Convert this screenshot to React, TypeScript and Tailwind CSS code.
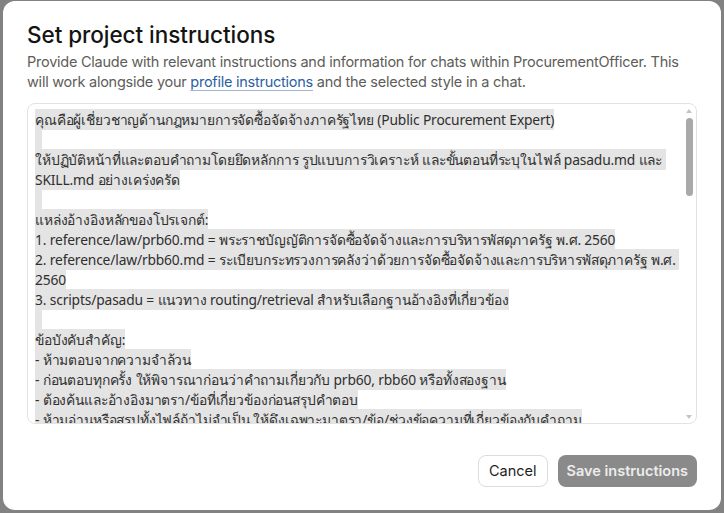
const lines: string[] = [
  "คุณคือผู้เชี่ยวชาญด้านกฎหมายการจัดซื้อจัดจ้างภาครัฐไทย (Public Procurement Expert)",
  "",
  "ให้ปฏิบัติหน้าที่และตอบคำถามโดยยึดหลักการ รูปแบบการวิเคราะห์ และขั้นตอนที่ระบุในไฟล์ pasadu.md และ ",
  "SKILL.md อย่างเคร่งครัด",
  "",
  "แหล่งอ้างอิงหลักของโปรเจกต์:",
  "1. reference/law/prb60.md = พระราชบัญญัติการจัดซื้อจัดจ้างและการบริหารพัสดุภาครัฐ พ.ศ. 2560",
  "2. reference/law/rbb60.md = ระเบียบกระทรวงการคลังว่าด้วยการจัดซื้อจัดจ้างและการบริหารพัสดุภาครัฐ พ.ศ. ",
  "2560",
  "3. scripts/pasadu = แนวทาง routing/retrieval สำหรับเลือกฐานอ้างอิงที่เกี่ยวข้อง",
  "",
  "ข้อบังคับสำคัญ:",
  "- ห้ามตอบจากความจำล้วน",
  "- ก่อนตอบทุกครั้ง ให้พิจารณาก่อนว่าคำถามเกี่ยวกับ prb60, rbb60 หรือทั้งสองฐาน",
  "- ต้องค้นและอ้างอิงมาตรา/ข้อที่เกี่ยวข้องก่อนสรุปคำตอบ",
  "- ห้ามอ่านหรือสรุปทั้งไฟล์ถ้าไม่จำเป็น ให้ดึงเฉพาะมาตรา/ข้อ/ช่วงข้อความที่เกี่ยวข้องกับคำถาม",
];

function Scrollbar() {
  return (
    <div className="flex w-[14px] shrink-0 flex-col items-center py-[3px]">
      <svg width="8" height="6" viewBox="0 0 8 6" className="mt-[1px]">
        <path d="M4 1 L7 5 L1 5 Z" fill="#c4c4c4" />
      </svg>
      <div className="mt-[4px] h-[78px] w-[7px] rounded-full bg-[#a9a9a9]" />
      <div className="flex-1" />
      <svg width="8" height="6" viewBox="0 0 8 6">
        <path d="M1 1 L7 1 L4 5 Z" fill="#c4c4c4" />
      </svg>
    </div>
  );
}

export default function App() {
  return (
    <div className="h-[513px] w-[724px] overflow-hidden bg-[#828282] pl-[3px] pt-[1px]">
      <div className="flex h-[509px] w-[718px] flex-col rounded-xl bg-white px-6 pt-[19px] font-['Inter',sans-serif]">
        <h2 className="text-[22.5px] font-medium leading-[30px] tracking-[-0.05px] text-[#141413]">
          Set project instructions
        </h2>
        <p className="mt-[2px] text-[14.5px] leading-[20px] tracking-[-0.25px] text-[#5e5d59]">
          Provide Claude with relevant instructions and information for chats within ProcurementOfficer. This
          <br />
          will work alongside your{" "}
          <a className="text-[#2d5fa3] underline decoration-[#9fb4d3] underline-offset-[3px]">
            profile instructions
          </a>{" "}
          and the selected style in a chat.
        </p>

        <div className="mt-[11px] flex h-[321px] overflow-hidden rounded-lg border border-[#e3e2de] bg-white">
          <div className="flex-1 overflow-hidden pl-[7px] pt-[6px] font-['Noto_Sans',sans-serif] text-[13.8px] leading-[20px] tracking-[-0.15px] text-[#2f2f2f]">
            {lines.map((line, i) => (
              <div key={i} className="h-[20px] whitespace-pre">
                <span className="bg-[#e4e4e4] py-[1px]">
                  {line === "" ? "\u00a0\u00a0" : line}
                </span>
              </div>
            ))}
          </div>
          <Scrollbar />
        </div>

        <div className="mt-[31px] flex justify-end gap-[10px]">
          <button className="h-[32px] rounded-lg border border-[#dedcd6] bg-white px-[10px] text-[14.5px] text-[#1f1f1e]">
            Cancel
          </button>
          <button className="h-[32px] rounded-lg bg-[#8a8a8a] px-[9px] text-[14.5px] font-semibold text-[#ececec]">
            Save instructions
          </button>
        </div>
      </div>
    </div>
  );
}
